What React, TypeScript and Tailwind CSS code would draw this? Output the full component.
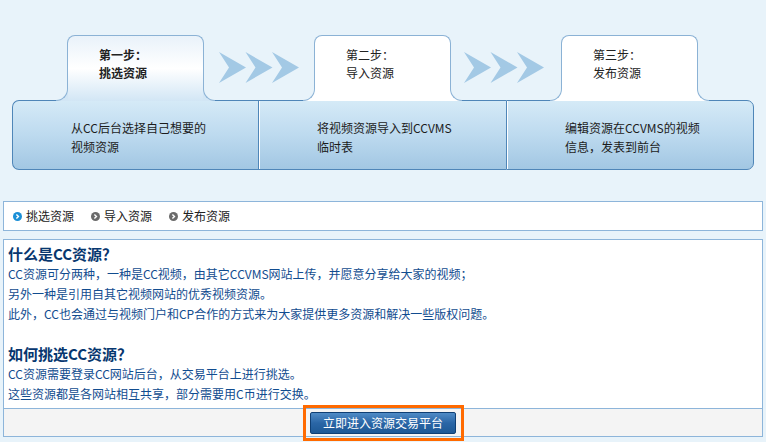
import React from "react";

const steps = [
  { title: "第一步：", name: "挑选资源", desc: ["从CC后台选择自己想要的", "视频资源"], active: true },
  { title: "第二步：", name: "导入资源", desc: ["将视频资源导入到CCVMS", "临时表"], active: false },
  { title: "第三步：", name: "发布资源", desc: ["编辑资源在CCVMS的视频", "信息，发表到前台"], active: false },
];

const Arrows = () => (
  <svg width="80" height="31" viewBox="0 0 80 31" className="shrink-0">
    {[0, 26.5, 53].map((x) => (
      <polygon key={x} points={`${x},0 ${x + 27},15.5 ${x},31 ${x + 10},15.5`} fill="#a3c9e5" />
    ))}
  </svg>
);

const NavIcon = ({ active }: { active: boolean }) => (
  <svg width="9" height="9" viewBox="0 0 9 9" className="shrink-0">
    <circle cx="4.5" cy="4.5" r="4.5" fill={active ? "#1b8fd6" : "#6b6b6b"} />
    <path d="M3.4 2.4 L5.5 4.5 L3.4 6.6" stroke="#fff" strokeWidth="1.4" fill="none" />
  </svg>
);

const StepColumn = ({ step, index }: { step: (typeof steps)[number]; index: number }) => {
  const fill = step.active ? "bg-[#d2e6f5]" : "bg-white";
  const first = index === 0;
  const last = index === steps.length - 1;
  return (
    <div className={`flex flex-col ${first ? "w-[246px]" : "w-[248px]"}`}>
      <div className={`flex h-[65px] items-start ${index === 1 ? "pl-[56px]" : "pl-[55px]"}`}>
        <div
          className={`relative z-10 h-[66px] w-[137px] shrink-0 rounded-t-[8px] border-x border-t border-[#8bb2d5] pl-[31px] pt-[10px] text-[12px] leading-[18px] text-[#222] ${
            step.active ? "bg-gradient-to-b from-[#e9f2fa] via-white to-[#d2e6f5] font-bold" : "bg-white"
          }`}
        >
          <div>{step.title}</div>
          <div>{step.name}</div>
          <div className={`absolute bottom-0 left-[-12px] h-[12px] w-[12px] ${fill}`}>
            <div className="h-full w-full rounded-br-[12px] border-b border-r border-[#8bb2d5] bg-[#e8f3fa]" />
          </div>
          <div className={`absolute bottom-0 right-[-12px] h-[12px] w-[12px] ${fill}`}>
            <div className="h-full w-full rounded-bl-[12px] border-b border-l border-[#8bb2d5] bg-[#e8f3fa]" />
          </div>
        </div>
        {!last && (
          <div className={`self-center ${index === 1 ? "ml-[13px]" : "ml-[15px]"}`}>
            <Arrows />
          </div>
        )}
      </div>
      <div
        className={`h-[70px] border-y border-[#4f86b8] bg-gradient-to-b from-[#d5eaf7] via-[#bddaef] to-[#a2c7e3] pl-[58px] pt-[17px] text-[12px] leading-[19px] text-[#1c1c1c] ${
          first ? "rounded-l-[7px] border-l" : "border-l shadow-[inset_1px_0_0_#ffffff]"
        } ${last ? "rounded-r-[7px] border-r" : ""}`}
      >
        {step.desc.map((d) => (
          <div key={d}>{d}</div>
        ))}
      </div>
    </div>
  );
};

export default function App() {
  return (
    <div className="h-[442px] w-[766px] overflow-hidden bg-[#e8f3fa] font-['Noto_Sans_CJK_SC',sans-serif]">
      <div className="flex px-[12px] pt-[35px]">
        {steps.map((s, i) => (
          <StepColumn key={s.name} step={s} index={i} />
        ))}
      </div>

      <div className="mx-[3px] mt-[31px] flex h-[30px] items-center border border-[#8db5da] bg-white pl-[9px] text-[12px] text-[#222]">
        {steps.map((s, i) => (
          <div key={s.name} className={`flex items-center gap-[4px] ${i > 0 ? "ml-[17px]" : ""}`}>
            <NavIcon active={s.active} />
            <span>{s.name}</span>
          </div>
        ))}
      </div>

      <div className="mx-[3px] mt-[8px] border border-[#8db5da] bg-white">
        <div className="px-[4px] pb-[4px] pt-[4px] text-[12px] leading-[20px] text-[#114c8f]">
          <div className="text-[15px] font-bold text-[#07376f]">什么是CC资源？</div>
          <div>CC资源可分两种，一种是CC视频，由其它CCVMS网站上传，并愿意分享给大家的视频；</div>
          <div>另外一种是引用自其它视频网站的优秀视频资源。</div>
          <div>此外，CC也会通过与视频门户和CP合作的方式来为大家提供更多资源和解决一些版权问题。</div>
          <div className="h-[20px]" />
          <div className="text-[15px] font-bold text-[#07376f]">如何挑选CC资源？</div>
          <div>CC资源需要登录CC网站后台，从交易平台上进行挑选。</div>
          <div>这些资源都是各网站相互共享，部分需要用C币进行交换。</div>
        </div>
        <div className="flex h-[28px] items-center justify-center border-t border-[#8db5da] bg-[#f4f4f4]">
          <div className="relative">
            <button className="flex h-[22px] w-[146px] items-center justify-center rounded-[2px] border border-[#0f3f74] bg-gradient-to-b from-[#4f8bc6] via-[#2a66a6] to-[#1d5895] text-[12px] text-white">
              立即进入资源交易平台
            </button>
            <div className="pointer-events-none absolute bottom-[-7px] left-[-7px] right-[-8px] top-[-7px] border-[3px] border-[#ff6a00]" />
          </div>
        </div>
      </div>
    </div>
  );
}
